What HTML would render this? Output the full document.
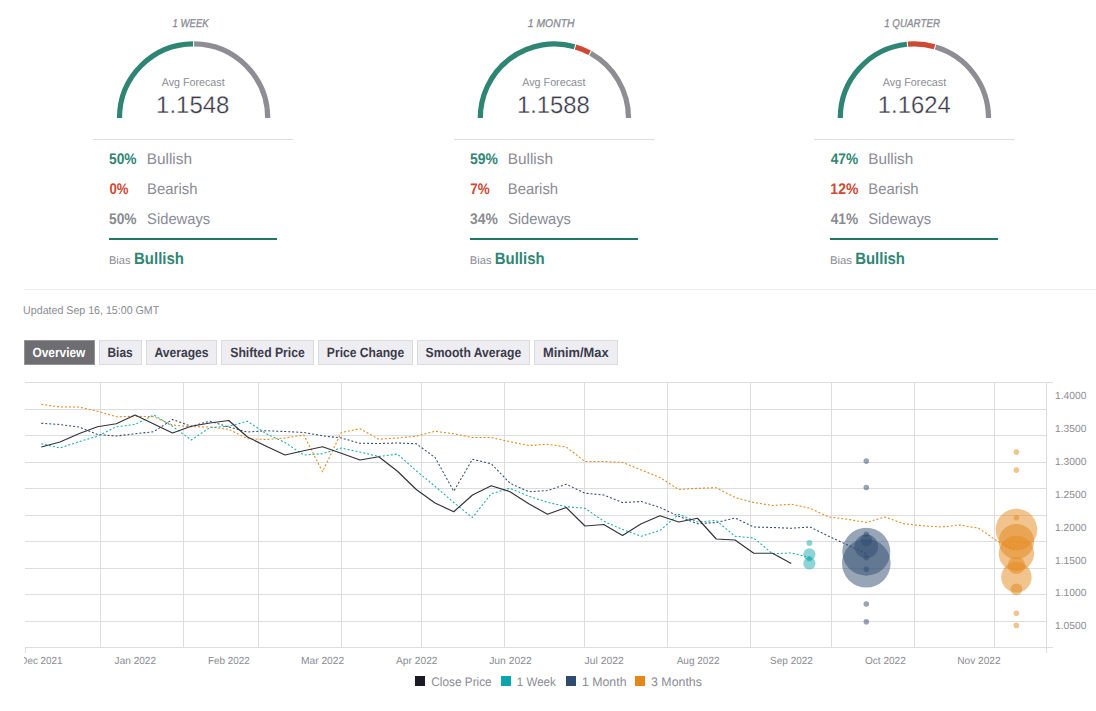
<!DOCTYPE html>
<html><head><meta charset="utf-8"><title>Forecast</title>
<style>
html,body{margin:0;padding:0;background:#fff;}
body{width:1096px;height:711px;overflow:hidden;}
svg{display:block;}
svg text{font-family:"Liberation Sans",sans-serif;text-rendering:geometricPrecision;}
</style></head><body>
<svg width="1096" height="711" viewBox="0 0 1096 711">
<path d="M119.50,118.00 A74.1,74.1 0 0 1 193.09,43.90" fill="none" stroke="#2f8573" stroke-width="5.2"/>
<path d="M194.11,43.90 A74.1,74.1 0 0 1 267.70,118.00" fill="none" stroke="#8d8d93" stroke-width="5.2"/>
<rect x="93" y="139" width="200" height="1" fill="#dddde0"/>
<rect x="109" y="238" width="168" height="2" fill="#1f7766"/>
<path d="M480.30,118.00 A74.1,74.1 0 0 1 574.58,46.70" fill="none" stroke="#2f8573" stroke-width="5.2"/>
<path d="M575.56,46.99 A74.1,74.1 0 0 1 589.65,52.82" fill="none" stroke="#cc4933" stroke-width="5.2"/>
<path d="M590.55,53.31 A74.1,74.1 0 0 1 628.50,118.00" fill="none" stroke="#8d8d93" stroke-width="5.2"/>
<rect x="454" y="139" width="200" height="1" fill="#dddde0"/>
<rect x="470" y="238" width="168" height="2" fill="#1f7766"/>
<path d="M840.30,118.00 A74.1,74.1 0 0 1 906.92,44.28" fill="none" stroke="#2f8573" stroke-width="5.2"/>
<path d="M907.94,44.18 A74.1,74.1 0 0 1 934.58,46.70" fill="none" stroke="#cc4933" stroke-width="5.2"/>
<path d="M935.56,46.99 A74.1,74.1 0 0 1 988.50,118.00" fill="none" stroke="#8d8d93" stroke-width="5.2"/>
<rect x="814" y="139" width="200" height="1" fill="#dddde0"/>
<rect x="830" y="238" width="168" height="2" fill="#1f7766"/>
<rect x="24" y="289" width="1072" height="1" fill="#ebebf0"/>
<rect x="24.5" y="340.5" width="70.0" height="24" fill="#6d6d72" stroke="#939398" stroke-width="1"/>
<rect x="99.5" y="340.5" width="42.0" height="24" fill="#ededf2" stroke="#dadbdf" stroke-width="1"/>
<rect x="146.5" y="340.5" width="70.0" height="24" fill="#ededf2" stroke="#dadbdf" stroke-width="1"/>
<rect x="221.5" y="340.5" width="92.0" height="24" fill="#ededf2" stroke="#dadbdf" stroke-width="1"/>
<rect x="318.5" y="340.5" width="94.0" height="24" fill="#ededf2" stroke="#dadbdf" stroke-width="1"/>
<rect x="417.5" y="340.5" width="112.0" height="24" fill="#ededf2" stroke="#dadbdf" stroke-width="1"/>
<rect x="534.5" y="340.5" width="83.0" height="24" fill="#ededf2" stroke="#dadbdf" stroke-width="1"/>
<g stroke="#dcdde0" stroke-width="1" shape-rendering="crispEdges"><line x1="25" y1="382.50" x2="1052.5" y2="382.50"/><line x1="25" y1="409.50" x2="1046.5" y2="409.50"/><line x1="25" y1="435.50" x2="1046.5" y2="435.50"/><line x1="25" y1="462.50" x2="1046.5" y2="462.50"/><line x1="25" y1="488.50" x2="1046.5" y2="488.50"/><line x1="25" y1="515.50" x2="1046.5" y2="515.50"/><line x1="25" y1="541.50" x2="1046.5" y2="541.50"/><line x1="25" y1="568.50" x2="1046.5" y2="568.50"/><line x1="25" y1="594.50" x2="1046.5" y2="594.50"/><line x1="25" y1="621.50" x2="1046.5" y2="621.50"/><line x1="25" y1="647.50" x2="1046.5" y2="647.50"/><line x1="100.5" y1="382.5" x2="100.5" y2="647.5"/><line x1="183.5" y1="382.5" x2="183.5" y2="647.5"/><line x1="258.5" y1="382.5" x2="258.5" y2="647.5"/><line x1="341.5" y1="382.5" x2="341.5" y2="647.5"/><line x1="421.5" y1="382.5" x2="421.5" y2="647.5"/><line x1="504.5" y1="382.5" x2="504.5" y2="647.5"/><line x1="584.5" y1="382.5" x2="584.5" y2="647.5"/><line x1="667.5" y1="382.5" x2="667.5" y2="647.5"/><line x1="750.5" y1="382.5" x2="750.5" y2="647.5"/><line x1="831.5" y1="382.5" x2="831.5" y2="647.5"/><line x1="914.5" y1="382.5" x2="914.5" y2="647.5"/><line x1="994.5" y1="382.5" x2="994.5" y2="647.5"/><line x1="1046.5" y1="382.5" x2="1046.5" y2="647.5"/><line x1="25.5" y1="647.5" x2="25.5" y2="653"/><line x1="1046.5" y1="647.5" x2="1046.5" y2="653"/><line x1="1046.5" y1="647.5" x2="1052.5" y2="647.5"/></g>
<g fill="none" stroke-width="1.05" stroke-linejoin="round">
<polyline points="41.25,404.25 60.00,407.00 78.75,407.00 97.50,411.25 116.25,416.75 135.00,416.25 153.75,416.75 172.50,425.00 191.25,426.75 210.00,427.00 228.75,429.25 247.50,438.75 266.25,439.50 285.00,438.00 303.75,435.00 322.50,471.75 341.25,432.50 360.00,428.75 378.75,439.25 397.50,438.00 416.25,436.25 435.00,431.25 453.75,433.75 472.50,437.50 491.25,437.50 510.00,441.75 528.75,445.50 547.50,444.25 566.25,447.00 585.00,461.50 603.75,461.50 622.50,462.50 641.25,470.00 660.00,477.50 678.75,489.50 697.50,488.25 716.25,487.75 735.00,497.50 753.75,502.50 772.50,505.50 791.25,504.25 810.00,508.25 828.75,517.00 847.50,519.25 866.25,522.50 885.00,517.00 903.75,523.75 922.50,525.75 941.25,527.00 960.00,525.00 978.75,528.25 997.50,541.25 1016.25,550.75" stroke="#e4871b" stroke-dasharray="2,2"/>
<polyline points="41.25,423.25 60.00,424.50 78.75,427.00 97.50,434.50 116.25,436.00 135.00,433.75 153.75,431.75 172.50,419.50 191.25,426.25 210.00,421.25 228.75,427.00 247.50,432.00 266.25,430.75 285.00,431.50 303.75,432.50 322.50,435.75 341.25,438.00 360.00,443.25 378.75,443.50 397.50,443.00 416.25,443.75 435.00,457.50 453.75,491.25 472.50,459.25 491.25,463.75 510.00,483.25 528.75,491.75 547.50,490.60 566.25,484.25 585.00,493.25 603.75,495.00 622.50,502.50 641.25,501.50 660.00,507.50 678.75,516.25 697.50,523.75 716.25,522.50 735.00,518.00 753.75,527.00 772.50,527.50 791.25,528.25 810.00,527.00 828.75,536.25 847.50,545.00 866.25,553.75" stroke="#304b70" stroke-dasharray="2,2"/>
<polyline points="41.25,443.75 60.00,448.00 78.75,441.75 97.50,436.25 116.25,426.75 135.00,424.50 153.75,415.00 172.50,426.25 191.25,440.00 210.00,427.50 228.75,426.25 247.50,421.25 266.25,433.75 285.00,442.50 303.75,455.00 322.50,453.75 341.25,448.00 360.00,452.00 378.75,456.50 397.50,454.00 416.25,470.75 435.00,486.25 453.75,502.50 472.50,517.50 491.25,493.75 510.00,488.25 528.75,496.25 547.50,502.25 566.25,506.75 585.00,508.25 603.75,521.25 622.50,529.50 641.25,536.25 660.00,530.50 678.75,514.25 697.50,522.00 716.25,520.50 735.00,536.25 753.75,538.00 772.50,553.75 791.25,553.00 810.00,557.50" stroke="#1ca9ae" stroke-dasharray="2,2"/>
<polyline points="41.25,447.00 60.00,442.00 78.75,433.75 97.50,426.75 116.25,423.75 135.00,415.00 153.75,424.00 172.50,433.00 191.25,426.25 210.00,423.00 228.75,420.50 247.50,437.00 266.25,446.25 285.00,455.00 303.75,450.75 322.50,446.75 341.25,453.25 360.00,460.00 378.75,456.75 397.50,471.25 416.25,489.50 435.00,503.00 453.75,511.75 472.50,495.00 491.25,485.75 510.00,491.75 528.75,503.75 547.50,514.25 566.25,507.50 585.00,526.00 603.75,524.50 622.50,535.50 641.25,523.75 660.00,515.75 678.75,522.00 697.50,518.25 716.25,539.00 735.00,540.00 753.75,553.25 772.50,553.25 791.25,563.50" stroke="#33343c" stroke-width="1.2"/>
</g>
<circle cx="809.4" cy="543" r="3" fill="#1ca9ae" fill-opacity="0.5"/><circle cx="809.4" cy="554.4" r="6.1" fill="#1ca9ae" fill-opacity="0.5"/><circle cx="809.4" cy="563.4" r="6.1" fill="#1ca9ae" fill-opacity="0.5"/><circle cx="809.4" cy="558.8" r="2.8" fill="#1ca9ae" fill-opacity="0.5"/><circle cx="866.3" cy="461.1" r="2.8" fill="#304b70" fill-opacity="0.5"/><circle cx="866.3" cy="487.5" r="2.8" fill="#304b70" fill-opacity="0.5"/><circle cx="866.3" cy="534.2" r="2.8" fill="#304b70" fill-opacity="0.5"/><circle cx="866.3" cy="557.6" r="2.8" fill="#304b70" fill-opacity="0.5"/><circle cx="866.3" cy="569.3" r="2.8" fill="#304b70" fill-opacity="0.5"/><circle cx="866.3" cy="604" r="2.8" fill="#304b70" fill-opacity="0.5"/><circle cx="866.3" cy="621.7" r="2.8" fill="#304b70" fill-opacity="0.5"/><circle cx="866.3" cy="551.7" r="24" fill="#304b70" fill-opacity="0.5"/><circle cx="866.3" cy="563.3" r="24.3" fill="#304b70" fill-opacity="0.5"/><circle cx="866.3" cy="546.4" r="11.8" fill="#304b70" fill-opacity="0.5"/><circle cx="866.3" cy="539.9" r="6" fill="#304b70" fill-opacity="0.5"/><circle cx="1016.4" cy="452.1" r="2.8" fill="#e4871b" fill-opacity="0.5"/><circle cx="1016.4" cy="470.1" r="2.8" fill="#e4871b" fill-opacity="0.5"/><circle cx="1016.4" cy="517.8" r="2.8" fill="#e4871b" fill-opacity="0.5"/><circle cx="1016.4" cy="613.3" r="2.8" fill="#e4871b" fill-opacity="0.5"/><circle cx="1016.4" cy="625.4" r="2.8" fill="#e4871b" fill-opacity="0.5"/><circle cx="1016.4" cy="529.5" r="20.8" fill="#e4871b" fill-opacity="0.5"/><circle cx="1016.4" cy="541.6" r="17.7" fill="#e4871b" fill-opacity="0.5"/><circle cx="1016.4" cy="553.4" r="17.7" fill="#e4871b" fill-opacity="0.5"/><circle cx="1016.4" cy="565.4" r="8.7" fill="#e4871b" fill-opacity="0.5"/><circle cx="1016.4" cy="577.2" r="15.2" fill="#e4871b" fill-opacity="0.5"/><circle cx="1016.4" cy="589.3" r="5.9" fill="#e4871b" fill-opacity="0.5"/>
<defs><clipPath id="cl"><rect x="24" y="650" width="1072" height="30"/></clipPath></defs>
<rect x="415" y="676" width="10" height="10" fill="#1b1b25"/>
<rect x="501" y="676" width="10" height="10" fill="#0ba5ad"/>
<rect x="566" y="676" width="10" height="10" fill="#304b70"/>
<rect x="635" y="676" width="10" height="10" fill="#e4871b"/>
<text x="172.56" y="26.9" font-size="11.3" font-weight="normal" font-style="italic" stroke="#8b8b95" stroke-width="0.3" fill="#8b8b95" textLength="36.15" lengthAdjust="spacingAndGlyphs">1 WEEK</text>
<text x="161.82" y="86" font-size="11.3" font-weight="normal" fill="#8b8b95" textLength="62.84" lengthAdjust="spacingAndGlyphs">Avg Forecast</text>
<text x="156.13" y="112.6" font-size="23.9" font-weight="normal" stroke="#ffffff" stroke-width="0.28" fill="#3b3b4b" textLength="73.27" lengthAdjust="spacingAndGlyphs">1.1548</text>
<text x="108.99" y="163.6" font-size="15.4" font-weight="bold" fill="#2f8573" textLength="27.51" lengthAdjust="spacingAndGlyphs">50%</text>
<text x="146.68" y="163.6" font-size="15.4" font-weight="normal" fill="#8b8b95" textLength="45.32" lengthAdjust="spacingAndGlyphs">Bullish</text>
<text x="109.38" y="193.6" font-size="15.4" font-weight="bold" fill="#cc4933" textLength="18.95" lengthAdjust="spacingAndGlyphs">0%</text>
<text x="147.12" y="193.6" font-size="15.4" font-weight="normal" fill="#8b8b95" textLength="50.40" lengthAdjust="spacingAndGlyphs">Bearish</text>
<text x="109.01" y="223.6" font-size="15.4" font-weight="bold" fill="#8a8a90" textLength="27.50" lengthAdjust="spacingAndGlyphs">50%</text>
<text x="147.12" y="223.6" font-size="15.4" font-weight="normal" fill="#8b8b95" textLength="63.01" lengthAdjust="spacingAndGlyphs">Sideways</text>
<text x="108.93" y="263.8" font-size="11.2" font-weight="normal" fill="#8b8b95" textLength="21.53" lengthAdjust="spacingAndGlyphs">Bias</text>
<text x="134.06" y="263.8" font-size="16.5" font-weight="bold" fill="#2f8573" textLength="49.88" lengthAdjust="spacingAndGlyphs">Bullish</text>
<text x="527.83" y="26.9" font-size="11.3" font-weight="normal" font-style="italic" stroke="#8b8b95" stroke-width="0.3" fill="#8b8b95" textLength="46.64" lengthAdjust="spacingAndGlyphs">1 MONTH</text>
<text x="522.26" y="86" font-size="11.3" font-weight="normal" fill="#8b8b95" textLength="63.14" lengthAdjust="spacingAndGlyphs">Avg Forecast</text>
<text x="516.88" y="112.6" font-size="23.9" font-weight="normal" stroke="#ffffff" stroke-width="0.28" fill="#3b3b4b" textLength="72.88" lengthAdjust="spacingAndGlyphs">1.1588</text>
<text x="470.10" y="163.6" font-size="15.4" font-weight="bold" fill="#2f8573" textLength="27.91" lengthAdjust="spacingAndGlyphs">59%</text>
<text x="507.74" y="163.6" font-size="15.4" font-weight="normal" fill="#8b8b95" textLength="45.18" lengthAdjust="spacingAndGlyphs">Bullish</text>
<text x="470.32" y="193.6" font-size="15.4" font-weight="bold" fill="#cc4933" textLength="19.45" lengthAdjust="spacingAndGlyphs">7%</text>
<text x="507.78" y="193.6" font-size="15.4" font-weight="normal" fill="#8b8b95" textLength="50.33" lengthAdjust="spacingAndGlyphs">Bearish</text>
<text x="470.09" y="223.6" font-size="15.4" font-weight="bold" fill="#8a8a90" textLength="27.83" lengthAdjust="spacingAndGlyphs">34%</text>
<text x="508.00" y="223.6" font-size="15.4" font-weight="normal" fill="#8b8b95" textLength="62.90" lengthAdjust="spacingAndGlyphs">Sideways</text>
<text x="469.87" y="263.8" font-size="11.2" font-weight="normal" fill="#8b8b95" textLength="21.75" lengthAdjust="spacingAndGlyphs">Bias</text>
<text x="494.79" y="263.8" font-size="16.5" font-weight="bold" fill="#2f8573" textLength="49.85" lengthAdjust="spacingAndGlyphs">Bullish</text>
<text x="884.20" y="26.9" font-size="11.3" font-weight="normal" font-style="italic" stroke="#8b8b95" stroke-width="0.3" fill="#8b8b95" textLength="55.88" lengthAdjust="spacingAndGlyphs">1 QUARTER</text>
<text x="882.82" y="86" font-size="11.3" font-weight="normal" fill="#8b8b95" textLength="63.36" lengthAdjust="spacingAndGlyphs">Avg Forecast</text>
<text x="877.84" y="112.6" font-size="23.9" font-weight="normal" stroke="#ffffff" stroke-width="0.28" fill="#3b3b4b" textLength="72.85" lengthAdjust="spacingAndGlyphs">1.1624</text>
<text x="830.70" y="163.6" font-size="15.4" font-weight="bold" fill="#2f8573" textLength="27.39" lengthAdjust="spacingAndGlyphs">47%</text>
<text x="868.20" y="163.6" font-size="15.4" font-weight="normal" fill="#8b8b95" textLength="45.10" lengthAdjust="spacingAndGlyphs">Bullish</text>
<text x="830.35" y="193.6" font-size="15.4" font-weight="bold" fill="#cc4933" textLength="28.01" lengthAdjust="spacingAndGlyphs">12%</text>
<text x="868.29" y="193.6" font-size="15.4" font-weight="normal" fill="#8b8b95" textLength="50.26" lengthAdjust="spacingAndGlyphs">Bearish</text>
<text x="830.74" y="223.6" font-size="15.4" font-weight="bold" fill="#8a8a90" textLength="27.47" lengthAdjust="spacingAndGlyphs">41%</text>
<text x="868.23" y="223.6" font-size="15.4" font-weight="normal" fill="#8b8b95" textLength="62.88" lengthAdjust="spacingAndGlyphs">Sideways</text>
<text x="829.98" y="263.8" font-size="11.2" font-weight="normal" fill="#8b8b95" textLength="22.04" lengthAdjust="spacingAndGlyphs">Bias</text>
<text x="855.21" y="263.8" font-size="16.5" font-weight="bold" fill="#2f8573" textLength="49.74" lengthAdjust="spacingAndGlyphs">Bullish</text>
<text x="23.12" y="314" font-size="11.3" font-weight="normal" fill="#8b8b95" textLength="136.06" lengthAdjust="spacingAndGlyphs">Updated Sep 16, 15:00 GMT</text>
<text x="32.45" y="356.9" font-size="13.4" font-weight="bold" fill="#ffffff" textLength="52.90" lengthAdjust="spacingAndGlyphs">Overview</text>
<text x="107.50" y="356.9" font-size="13.4" font-weight="bold" fill="#3b3b4b" textLength="25.17" lengthAdjust="spacingAndGlyphs">Bias</text>
<text x="154.43" y="356.9" font-size="13.4" font-weight="bold" fill="#3b3b4b" textLength="54.12" lengthAdjust="spacingAndGlyphs">Averages</text>
<text x="230.30" y="356.9" font-size="13.4" font-weight="bold" fill="#3b3b4b" textLength="74.47" lengthAdjust="spacingAndGlyphs">Shifted Price</text>
<text x="326.86" y="356.9" font-size="13.4" font-weight="bold" fill="#3b3b4b" textLength="77.27" lengthAdjust="spacingAndGlyphs">Price Change</text>
<text x="425.62" y="356.9" font-size="13.4" font-weight="bold" fill="#3b3b4b" textLength="95.58" lengthAdjust="spacingAndGlyphs">Smooth Average</text>
<text x="542.93" y="356.9" font-size="13.4" font-weight="bold" fill="#3b3b4b" textLength="65.70" lengthAdjust="spacingAndGlyphs">Minim/Max</text>
<text x="20.30" y="664" font-size="10.3" font-weight="normal" clip-path="url(#cl)" fill="#8b8b95" textLength="42.30" lengthAdjust="spacingAndGlyphs">Dec 2021</text>
<text x="114.61" y="664" font-size="10.3" font-weight="normal" fill="#8b8b95" textLength="41.41" lengthAdjust="spacingAndGlyphs">Jan 2022</text>
<text x="207.92" y="664" font-size="10.3" font-weight="normal" fill="#8b8b95" textLength="41.96" lengthAdjust="spacingAndGlyphs">Feb 2022</text>
<text x="300.90" y="664" font-size="10.3" font-weight="normal" fill="#8b8b95" textLength="43.31" lengthAdjust="spacingAndGlyphs">Mar 2022</text>
<text x="396.03" y="664" font-size="10.3" font-weight="normal" fill="#8b8b95" textLength="41.53" lengthAdjust="spacingAndGlyphs">Apr 2022</text>
<text x="489.21" y="664" font-size="10.3" font-weight="normal" fill="#8b8b95" textLength="42.50" lengthAdjust="spacingAndGlyphs">Jun 2022</text>
<text x="584.56" y="664" font-size="10.3" font-weight="normal" fill="#8b8b95" textLength="39.22" lengthAdjust="spacingAndGlyphs">Jul 2022</text>
<text x="676.68" y="664" font-size="10.3" font-weight="normal" fill="#8b8b95" textLength="42.87" lengthAdjust="spacingAndGlyphs">Aug 2022</text>
<text x="770.12" y="664" font-size="10.3" font-weight="normal" fill="#8b8b95" textLength="42.75" lengthAdjust="spacingAndGlyphs">Sep 2022</text>
<text x="864.98" y="664" font-size="10.3" font-weight="normal" fill="#8b8b95" textLength="40.78" lengthAdjust="spacingAndGlyphs">Oct 2022</text>
<text x="957.21" y="664" font-size="10.3" font-weight="normal" fill="#8b8b95" textLength="43.35" lengthAdjust="spacingAndGlyphs">Nov 2022</text>
<text x="1055.05" y="399.2" font-size="10.3" font-weight="normal" fill="#8b8b95" textLength="31.34" lengthAdjust="spacingAndGlyphs">1.4000</text>
<text x="1055.05" y="432.07" font-size="10.3" font-weight="normal" fill="#8b8b95" textLength="31.34" lengthAdjust="spacingAndGlyphs">1.3500</text>
<text x="1055.05" y="464.94" font-size="10.3" font-weight="normal" fill="#8b8b95" textLength="31.34" lengthAdjust="spacingAndGlyphs">1.3000</text>
<text x="1055.05" y="497.81" font-size="10.3" font-weight="normal" fill="#8b8b95" textLength="31.34" lengthAdjust="spacingAndGlyphs">1.2500</text>
<text x="1055.05" y="530.68" font-size="10.3" font-weight="normal" fill="#8b8b95" textLength="31.34" lengthAdjust="spacingAndGlyphs">1.2000</text>
<text x="1055.05" y="563.55" font-size="10.3" font-weight="normal" fill="#8b8b95" textLength="31.34" lengthAdjust="spacingAndGlyphs">1.1500</text>
<text x="1055.05" y="596.42" font-size="10.3" font-weight="normal" fill="#8b8b95" textLength="31.34" lengthAdjust="spacingAndGlyphs">1.1000</text>
<text x="1055.05" y="629.29" font-size="10.3" font-weight="normal" fill="#8b8b95" textLength="31.34" lengthAdjust="spacingAndGlyphs">1.0500</text>
<text x="431.35" y="685.8" font-size="12.4" font-weight="normal" fill="#8b8b95" textLength="60.31" lengthAdjust="spacingAndGlyphs">Close Price</text>
<text x="516.85" y="685.8" font-size="12.4" font-weight="normal" fill="#8b8b95" textLength="38.88" lengthAdjust="spacingAndGlyphs">1 Week</text>
<text x="581.93" y="685.8" font-size="12.4" font-weight="normal" fill="#8b8b95" textLength="44.58" lengthAdjust="spacingAndGlyphs">1 Month</text>
<text x="651.07" y="685.8" font-size="12.4" font-weight="normal" fill="#8b8b95" textLength="50.80" lengthAdjust="spacingAndGlyphs">3 Months</text>
</svg></body></html>
